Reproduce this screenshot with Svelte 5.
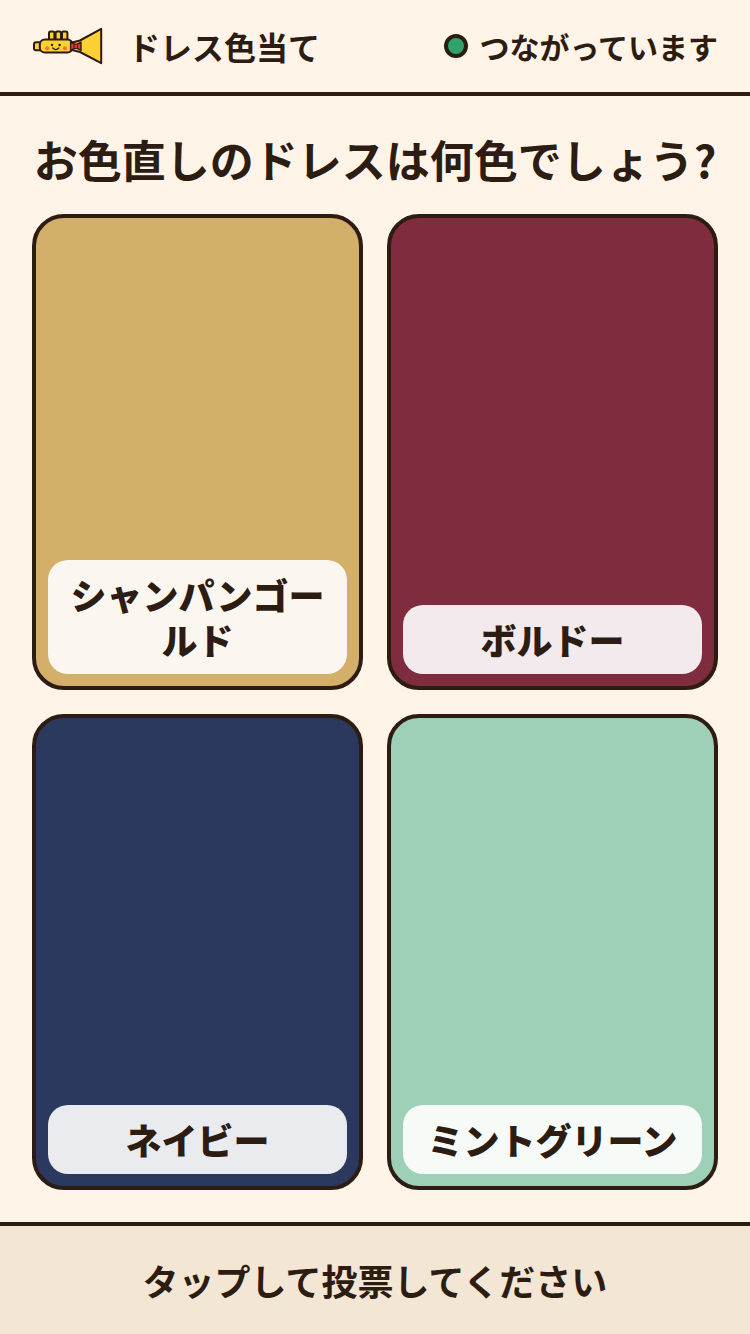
<script>
  let connected = true;
  let selected = null;

  const choices = [
    { id: "gold", label: "シャンパンゴールド", color: "#d4af69" },
    { id: "bordeaux", label: "ボルドー", color: "#7e2c3e" },
    { id: "navy", label: "ネイビー", color: "#2c395e" },
    { id: "mint", label: "ミントグリーン", color: "#9ecfb7" },
  ];

  function vote(id) {
    selected = id;
  }
</script>

<div class="page">
  <header>
    <svg class="logo" viewBox="0 0 72 40" aria-hidden="true">
      <g fill="#fdd033" stroke="#2c1c12" stroke-width="2" stroke-linejoin="round">
        <path d="M40 16.5 L48 14.5 L69.2 2.8 V37.2 L48 26 L40 24 Z" />
        <rect x="2" y="16.2" width="8" height="8" rx="2" />
        <rect x="17" y="5.6" width="5.4" height="10" rx="1.5" />
        <rect x="23.6" y="5.6" width="5.4" height="10" rx="1.5" />
        <rect x="30" y="5.6" width="5.4" height="10" rx="1.5" />
        <rect x="7.8" y="13.6" width="32.6" height="13" rx="5" />
      </g>
      <path d="M38.6 16 L43.8 18.8 L49 16 V24.4 L43.8 21.6 L38.6 24.4 Z" fill="#d8432f" stroke="#2c1c12" stroke-width="1.4" stroke-linejoin="round" />
      <rect x="42" y="18" width="3.6" height="4.4" rx="1" fill="#d8432f" stroke="#2c1c12" />
      <circle cx="15.2" cy="22.3" r="2" fill="#ff6f45" />
      <circle cx="33" cy="22.3" r="2" fill="#ff6f45" />
      <circle cx="20" cy="19" r="1.2" fill="#2c1c12" />
      <circle cx="27.6" cy="19" r="1.2" fill="#2c1c12" />
      <path d="M20.8 22 Q23.8 25.2 26.8 22" fill="none" stroke="#2c1c12" stroke-width="1.4" stroke-linecap="round" />
    </svg>
    <span class="name">ドレス色当て</span>
    <span class="status" role="status">
      <span class="dot" class:off={!connected}></span>
      {connected ? "つながっています" : "接続しています"}
    </span>
  </header>

  <main>
    <h1>お色直しのドレスは何色でしょう?</h1>
    <div class="choices">
      {#each choices as choice (choice.id)}
        <button
          type="button"
          aria-pressed={selected === choice.id}
          style="background-color: {choice.color}"
          on:click={() => vote(choice.id)}
        >
          <span class="label">{choice.label}</span>
        </button>
      {/each}
    </div>
  </main>

  <footer>{selected ? "投票しました" : "タップして投票してください"}</footer>
</div>

<style>
  :global(body) {
    background: #fff4e7;
  }

  .page {
    display: flex;
    flex-direction: column;
    min-height: 100vh;
    color: #2c1c12;
    font-family: "Noto Sans CJK JP", sans-serif;
    font-weight: 700;
  }

  header {
    display: flex;
    align-items: center;
    padding: 22px 32px;
    border-bottom: 4px solid #2c1c12;
    line-height: 48px;
  }

  .logo {
    width: 72px;
    height: 40px;
    margin-right: 24px;
  }

  .name {
    font-size: 32px;
  }

  .status {
    display: flex;
    align-items: center;
    gap: 12px;
    margin-left: auto;
    font-size: 30px;
  }

  .dot {
    box-sizing: border-box;
    width: 24px;
    height: 24px;
    border: 4px solid #2c1c12;
    border-radius: 50%;
    background: #2fa36b;
  }

  .dot.off {
    background: #d8432f;
  }

  main {
    flex: 1;
    display: flex;
    flex-direction: column;
    gap: 24px;
    padding: 32px;
  }

  h1 {
    margin: 0;
    font-size: 44px;
    line-height: 62px;
    text-align: center;
  }

  .choices {
    flex: 1;
    display: grid;
    grid-template-columns: 1fr 1fr;
    grid-auto-rows: 1fr;
    gap: 24px;
  }

  button {
    display: flex;
    align-items: flex-end;
    padding: 12px;
    border: 4px solid #2c1c12;
    border-radius: 32px;
    color: inherit;
    font: inherit;
    cursor: pointer;
  }

  .label {
    flex: 1;
    padding: 12px 16px;
    border-radius: 20px;
    background: rgba(255, 255, 255, 0.9);
    font-size: 36px;
    font-weight: 900;
    line-height: 45px;
    word-break: break-all;
  }

  footer {
    padding: 28px 32px;
    border-top: 4px solid #2c1c12;
    background: #f3e6d4;
    font-size: 36px;
    line-height: 52px;
    text-align: center;
  }
</style>
